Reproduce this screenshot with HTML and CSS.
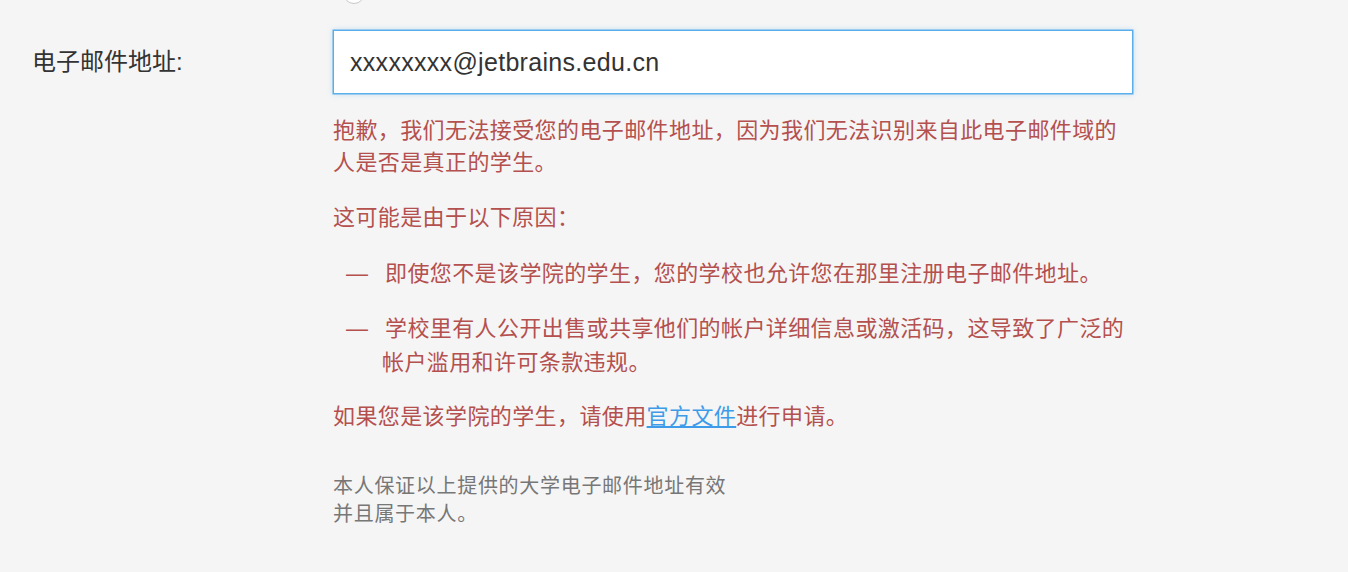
FILE: index.html
```html
<!DOCTYPE html>
<html lang="zh-CN">
<head>
    <meta charset="UTF-8">
    <meta name="viewport" content="width=device-width, initial-scale=1.0">
    <title>学生认证</title>
    <link rel="stylesheet" href="styles.css">
</head>
<body>
    <div class="form">
        <div class="form-row top-row">
            <div></div>
            <div class="field">
                <span class="radio"></span>
            </div>
        </div>

        <div class="form-row">
            <label class="form-label" for="email">电子邮件地址:</label>
            <div class="field">
                <input type="text" id="email" class="text-input" value="xxxxxxxx@jetbrains.edu.cn">

                <div class="error">
                    <p>抱歉，我们无法接受您的电子邮件地址，因为我们无法识别来自此电子邮件域的人是否是真正的学生。</p>
                    <p>这可能是由于以下原因：</p>
                    <ul class="reasons">
                        <li>即使您不是该学院的学生，您的学校也允许您在那里注册电子邮件地址。</li>
                        <li>学校里有人公开出售或共享他们的帐户详细信息或激活码，这导致了广泛的帐户滥用和许可条款违规。</li>
                    </ul>
                    <p>如果您是该学院的学生，请使用<a href="#">官方文件</a>进行申请。</p>
                </div>

                <p class="note">本人保证以上提供的大学电子邮件地址有效<br>并且属于本人。</p>
            </div>
        </div>
    </div>
</body>
</html>
```

FILE: styles.css
```css
body {
    margin: 0;
    background-color: #f5f5f5;
    font-family: "Liberation Sans", "Noto Sans CJK SC", sans-serif;
    color: #333;
}
.form-row {
    display: grid;
    grid-template-columns: 333px 800px;
}
.top-row {
    height: 30px;
}
.radio {
    display: block;
    width: 20px;
    height: 20px;
    margin: -18px 0 0 10px;
    border: 1px solid #c8c8c8;
    border-radius: 50%;
    background-color: #fff;
}
.form-label {
    padding-left: 32px;
    font-size: 24px;
    line-height: 64px;
    height: 64px;
    color: #333;
}
.text-input {
    display: block;
    box-sizing: border-box;
    width: 800px;
    height: 64px;
    padding: 0 16px;
    border: 1px solid #5aaeea;
    box-shadow: 0 0 0 0.5px #5aaeea, 0 0 6px rgba(90, 174, 234, 0.35);
    background-color: #fff;
    font-family: "Liberation Sans", sans-serif;
    font-size: 25px;
    letter-spacing: 0.3px;
    color: #333;
    outline: none;
}
.error {
    margin-top: 21px;
    color: #b4504e;
    font-size: 22px;
    letter-spacing: 0.4px;
    line-height: 32px;
}
.error p {
    margin: 0 0 23px;
}
.error a {
    color: #3d9be9;
    text-decoration: underline;
}
.reasons {
    list-style: none;
    margin: 0;
    padding: 0;
}
.reasons li {
    position: relative;
    padding-left: 49px;
    text-indent: 3px;
    line-height: 34px;
    margin-bottom: 21px;
}
.reasons li::before {
    content: "—";
    position: absolute;
    left: 13px;
    top: 0;
    text-indent: 0;
}
.note {
    margin: 39px 0 0;
    font-size: 20px;
    letter-spacing: 0.7px;
    line-height: 28px;
    color: #777;
}
```
